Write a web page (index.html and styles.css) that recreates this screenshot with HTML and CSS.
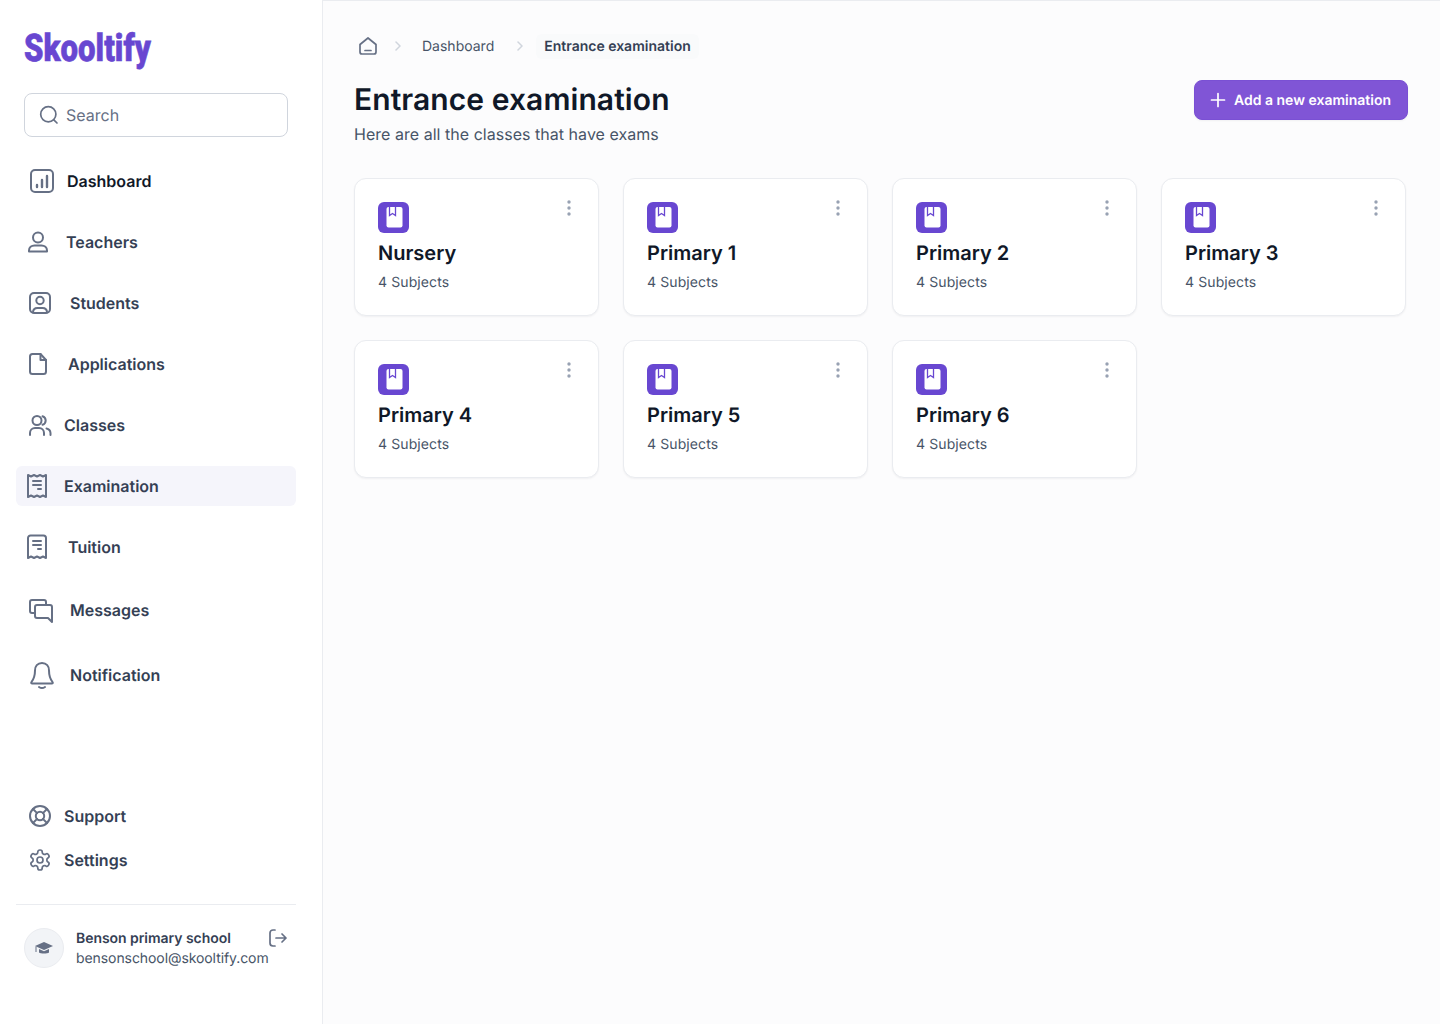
FILE: index.html
```html
<!DOCTYPE html>
<html lang="en">
<head>
    <meta charset="UTF-8">
    <meta name="viewport" content="width=device-width, initial-scale=1.0">
    <title>Entrance examination</title>
    <link rel="stylesheet" href="styles.css">
</head>
<body>
    <svg class="defs" width="0" height="0">
        <symbol id="book" viewBox="0 0 31 31">
            <rect width="31" height="31" rx="6" fill="#6847d1"/>
            <rect x="8.5" y="5" width="16" height="20.5" rx="2" fill="#fff"/>
            <path d="M11.5 5v8.5l3-2 3 2V5" fill="#fff" stroke="#6847d1" stroke-width="1.3"/>
        </symbol>
        <symbol id="dots" viewBox="0 0 12 16">
            <circle cx="6" cy="2" r="1.7" fill="#98a2b3"/>
            <circle cx="6" cy="8" r="1.7" fill="#98a2b3"/>
            <circle cx="6" cy="14" r="1.7" fill="#98a2b3"/>
        </symbol>
    </svg>

    <aside class="sidebar">
        <div class="logo"><span class="logo-text">Skooltify</span></div>

        <div class="search">
            <svg class="icon icon-thin" width="20" height="20" viewBox="0 0 20 20"><circle cx="9.3" cy="9.3" r="7.6"/><path d="M14.8 14.8l3.200 3.200"/></svg>
            <span>Search</span>
        </div>

        <nav class="nav">
            <a class="nav-item nav-item-dark">
                <svg class="icon" width="27" height="28" viewBox="0 0 27 28"><rect x="3" y="3" width="22" height="22" rx="4"/><path d="M9 20v-2M14 20v-7M19 20V9" stroke-width="2.400"/></svg>
                Dashboard
            </a>
            <a class="nav-item">
                <svg class="icon" width="26" height="28" viewBox="0 0 26 28"><circle cx="10" cy="9.500" r="5"/><path d="M1 23.500v-1c0-3 2.500-5 5.500-5h7c3 0 5.500 2 5.500 5v1z"/></svg>
                Teachers
            </a>
            <a class="nav-item">
                <svg class="icon" width="30" height="28" viewBox="0 0 30 28"><rect x="2" y="4" width="20" height="20" rx="4"/><circle cx="12" cy="11.500" r="3.700"/><path d="M5 23.500c0-3 2-4.500 4.500-4.500h5c2.500 0 4.500 1.500 4.500 4.500"/></svg>
                Students
            </a>
            <a class="nav-item">
                <svg class="icon" width="28" height="28" viewBox="0 0 28 28"><path d="M4.500 4h8l5.500 6v11.500a2.500 2.500 0 0 1-2.500 2.500h-11A2.500 2.500 0 0 1 2 21.500v-15A2.500 2.500 0 0 1 4.500 4z"/><path d="M12.500 4v6h5.500"/></svg>
                Applications
            </a>
            <a class="nav-item">
                <svg class="icon" width="24" height="28" viewBox="0 0 24 28"><circle cx="9" cy="9.500" r="4.500"/><path d="M2 24v-2a5 5 0 0 1 5-5h4a5 5 0 0 1 5 5v2M14.500 5.200a4.500 4.500 0 0 1 0 8.600M18.500 17.500a5 5 0 0 1 4 4.500v2"/></svg>
                Classes
            </a>
            <a class="nav-item nav-item-active">
                <svg class="icon" width="24" height="28" viewBox="0 0 24 28"><path d="M0 3l3 1.500L6 3l3 1.500L12 3l3 1.500L18 3v22l-3-1.500-3 1.500-3-1.500L6 25l-3-1.500L0 25z"/><path d="M5 9h8M5 13h8M10 17h3"/></svg>
                Examination
            </a>
            <a class="nav-item">
                <svg class="icon" width="28" height="28" viewBox="0 0 28 28"><path d="M0 25V5a2.500 2.500 0 0 1 2.500-2.500h13A2.500 2.500 0 0 1 18 5v20l-3-1.500-3 1.500-3-1.500L6 25l-3-1.500z"/><path d="M5 8h8M5 12h8M10 16h3"/></svg>
                Tuition
            </a>
            <a class="nav-item nav-item-tall">
                <svg class="icon" width="30" height="28" viewBox="0 0 30 28"><path d="M7 17H4a2 2 0 0 1-2-2V6a2 2 0 0 1 2-2h12a2 2 0 0 1 2 2v3"/><path d="M9 9h13a2 2 0 0 1 2 2v15l-4-4H9a2 2 0 0 1-2-2v-9a2 2 0 0 1 2-2z"/></svg>
                Messages
            </a>
            <a class="nav-item nav-item-tall">
                <svg class="icon" width="30" height="28" viewBox="0 0 30 28"><path d="M14 2c-4.500 0-7 3.300-7 7.500 0 5-1.200 8.500-3.500 11.500-.6.800-.3 1.500.7 1.500h19.600c1 0 1.300-.7.700-1.500C22.200 18 21 14.500 21 9.500 21 5.300 18.500 2 14 2z"/><path d="M11 26c1.800 1.300 4.200 1.300 6 0"/></svg>
                Notification
            </a>
        </nav>

        <div class="sidebar-bottom">
            <a class="nav-item">
                <svg class="icon" width="24" height="24" viewBox="0 0 24 24"><circle cx="12" cy="12" r="10"/><circle cx="12" cy="12" r="4.200"/><path d="M5 5l4.100 4.100M19 5l-4.100 4.100M5 19l4.100-4.100M19 19l-4.100-4.100"/></svg>
                Support
            </a>
            <a class="nav-item">
                <svg class="icon icon-thin" width="24" height="24" viewBox="0 0 24 24"><path d="M12.220 2h-.44a2 2 0 0 0-2 2v.18a2 2 0 0 1-1 1.730l-.43.25a2 2 0 0 1-2 0l-.15-.08a2 2 0 0 0-2.730.73l-.22.38a2 2 0 0 0 .73 2.730l.15.1a2 2 0 0 1 1 1.720v.51a2 2 0 0 1-1 1.740l-.15.09a2 2 0 0 0-.73 2.730l.22.38a2 2 0 0 0 2.730.73l.15-.08a2 2 0 0 1 2 0l.43.25a2 2 0 0 1 1 1.730V20a2 2 0 0 0 2 2h.44a2 2 0 0 0 2-2v-.18a2 2 0 0 1 1-1.730l.43-.25a2 2 0 0 1 2 0l.15.08a2 2 0 0 0 2.730-.73l.22-.39a2 2 0 0 0-.73-2.730l-.15-.08a2 2 0 0 1-1-1.740v-.5a2 2 0 0 1 1-1.740l.15-.09a2 2 0 0 0 .73-2.730l-.22-.38a2 2 0 0 0-2.730-.73l-.15.08a2 2 0 0 1-2 0l-.43-.25a2 2 0 0 1-1-1.730V4a2 2 0 0 0-2-2z"/><circle cx="12" cy="12" r="3"/></svg>
                Settings
            </a>

            <div class="profile">
                <div class="avatar">
                    <svg width="20" height="20" viewBox="0 0 20 20"><path d="M10 4L1 8l9 4 9-4z" fill="#667085"/><path d="M5 11v3.500c1.500 1.300 8.500 1.300 10 0V11l-5 2.200z" fill="#667085"/><path d="M2 8.500V14" stroke="#667085" stroke-width="1"/></svg>
                </div>
                <div class="profile-text">
                    <div class="profile-name">
                        <span>Benson primary school</span>
                        <svg class="icon icon-thin profile-logout" width="20" height="20" viewBox="0 0 20 20"><path d="M7 2H5a3 3 0 0 0-3 3v10a3 3 0 0 0 3 3h2M8 10h10M14 6l4 4-4 4"/></svg>
                    </div>
                    <div class="profile-email">bensonschool@skooltify.com</div>
                </div>
            </div>
        </div>
    </aside>

    <main class="main">
        <div class="breadcrumbs">
            <svg class="icon icon-thin" width="20" height="20" viewBox="0 0 20 20"><path d="M2 8.500L10 2l8 6.500V16a2 2 0 0 1-2 2H4a2 2 0 0 1-2-2z"/><path d="M7 14.500h6"/></svg>
            <svg class="chevron" width="8" height="10" viewBox="0 0 8 10"><path d="M2 1l4 4-4 4"/></svg>
            <span class="crumb">Dashboard</span>
            <svg class="chevron chevron-second" width="8" height="10" viewBox="0 0 8 10"><path d="M2 1l4 4-4 4"/></svg>
            <span class="crumb crumb-current">Entrance examination</span>
        </div>

        <header class="page-header">
            <div>
                <h1>Entrance examination</h1>
                <p>Here are all the classes that have exams</p>
            </div>
            <button class="add-button">
                <svg width="16" height="16" viewBox="0 0 16 16"><path d="M8 1.500v13M1.500 8h13" stroke="#fff" stroke-width="1.700" stroke-linecap="round"/></svg>
                Add a new examination
            </button>
        </header>

        <section class="cards">
            <div class="card">
                <div><svg class="card-icon"><use href="#book"/></svg><h2>Nursery</h2><p>4 Subjects</p></div>
                <svg class="card-menu"><use href="#dots"/></svg>
            </div>
            <div class="card">
                <div><svg class="card-icon"><use href="#book"/></svg><h2>Primary 1</h2><p>4 Subjects</p></div>
                <svg class="card-menu"><use href="#dots"/></svg>
            </div>
            <div class="card">
                <div><svg class="card-icon"><use href="#book"/></svg><h2>Primary 2</h2><p>4 Subjects</p></div>
                <svg class="card-menu"><use href="#dots"/></svg>
            </div>
            <div class="card">
                <div><svg class="card-icon"><use href="#book"/></svg><h2>Primary 3</h2><p>4 Subjects</p></div>
                <svg class="card-menu"><use href="#dots"/></svg>
            </div>
            <div class="card">
                <div><svg class="card-icon"><use href="#book"/></svg><h2>Primary 4</h2><p>4 Subjects</p></div>
                <svg class="card-menu"><use href="#dots"/></svg>
            </div>
            <div class="card">
                <div><svg class="card-icon"><use href="#book"/></svg><h2>Primary 5</h2><p>4 Subjects</p></div>
                <svg class="card-menu"><use href="#dots"/></svg>
            </div>
            <div class="card">
                <div><svg class="card-icon"><use href="#book"/></svg><h2>Primary 6</h2><p>4 Subjects</p></div>
                <svg class="card-menu"><use href="#dots"/></svg>
            </div>
        </section>
    </main>
</body>
</html>
```

FILE: styles.css
```css
* {
    box-sizing: border-box;
}

body {
    font-family: 'Inter', sans-serif;
    display: flex;
    height: 100vh;
    margin: 0;
    overflow: hidden;
    background-color: #fcfcfd;
    color: #344054;
    text-rendering: geometricPrecision;
}

.defs {
    position: absolute;
}

.icon {
    flex-shrink: 0;
    fill: none;
    stroke: #667085;
    stroke-width: 2;
    stroke-linecap: round;
    stroke-linejoin: round;
    overflow: visible;
}

.icon-thin {
    stroke-width: 1.7;
}

/* sidebar */
.sidebar {
    display: flex;
    flex-direction: column;
    flex-shrink: 0;
    width: 323px;
    padding: 0 26px 55px 16px;
    background-color: #fff;
    border-right: 1px solid #eaecf0;
}

.logo {
    height: 93px;
    padding: 26px 0 0 8px;
}

.logo-text {
    display: inline-block;
    font-family: 'Roboto', sans-serif;
    font-size: 38px;
    line-height: 46px;
    font-weight: 900;
    color: #6847d1;
    -webkit-text-stroke: 0.6px #6847d1;
    transform: scaleX(0.82);
    transform-origin: left;
}

.search {
    display: flex;
    align-items: center;
    gap: 7px;
    width: 264px;
    height: 44px;
    margin: 0 0 24px 8px;
    padding: 0 14px;
    border: 1px solid #d0d5dd;
    border-radius: 8px;
    font-size: 16px;
    color: #667085;
}

.nav {
    display: flex;
    flex-direction: column;
    gap: 21px;
}

.nav-item {
    display: flex;
    align-items: center;
    gap: 12px;
    height: 40px;
    padding: 0 12px;
    border-radius: 6px;
    font-size: 16px;
    font-weight: 600;
    color: #344054;
}

.nav-item-dark {
    color: #101828;
}

.nav-item-active {
    background-color: #f5f5fb;
}

.nav-item-tall {
    height: 44px;
}

.sidebar-bottom {
    display: flex;
    flex-direction: column;
    gap: 4px;
    margin-top: auto;
}

.profile {
    display: flex;
    gap: 12px;
    margin-top: 20px;
    padding: 23px 8px 0;
    border-top: 1px solid #eaecf0;
}

.avatar {
    display: flex;
    align-items: center;
    justify-content: center;
    flex-shrink: 0;
    width: 40px;
    height: 40px;
    border-radius: 50%;
    background-color: #f2f4f7;
    border: 1px solid #eaecf0;
}

.profile-text {
    flex: 1;
    margin-top: 1px;
    font-size: 14px;
    line-height: 20px;
    white-space: nowrap;
}

.profile-name {
    display: flex;
    justify-content: space-between;
    font-weight: 600;
    letter-spacing: -0.05px;
}

.profile-logout {
    margin-top: -1px;
}

.profile-email {
    color: #475467;
    letter-spacing: -0.08px;
}

/* main */
.main {
    flex: 1;
    padding: 32px 32px 0 31px;
    border-top: 1px solid #eaecf0;
}

.breadcrumbs {
    display: flex;
    align-items: center;
    height: 28px;
    margin-top: -1px;
    padding-left: 4px;
    font-size: 14px;
    color: #475467;
}

.chevron {
    margin: 0 20px 0 16px;
    fill: none;
    stroke: #d0d5dd;
    stroke-width: 1.500;
    stroke-linecap: round;
    stroke-linejoin: round;
}

.chevron-second {
    margin: 0 12px 0 22px;
}

.crumb-current {
    padding: 4px 8px;
    border-radius: 6px;
    background-color: #f9fafb;
    font-weight: 600;
    color: #344054;
}

.page-header {
    display: flex;
    justify-content: space-between;
    align-items: flex-start;
    margin-top: 20px;
}

h1 {
    margin: 1px 0 0;
    font-size: 30px;
    line-height: 38px;
    font-weight: 600;
    letter-spacing: 0.08px;
    color: #101828;
}

.page-header p {
    margin: 3px 0 0;
    font-size: 16px;
    line-height: 24px;
    letter-spacing: 0.03px;
    color: #475467;
}

.add-button {
    display: flex;
    align-items: center;
    gap: 8px;
    height: 40px;
    padding: 0 16px 0 15px;
    border: 1px solid #7a50d4;
    border-radius: 8px;
    background-color: #8055d6;
    font-family: inherit;
    font-size: 14px;
    font-weight: 600;
    color: #fff;
    text-rendering: geometricPrecision;
    box-shadow: 0 1px 2px rgba(16, 24, 40, 0.05);
}

.cards {
    display: grid;
    grid-template-columns: repeat(4, 245px);
    gap: 24px;
    margin-top: 32px;
}

.card {
    display: flex;
    justify-content: space-between;
    height: 138px;
    padding: 23px;
    background-color: #fff;
    border: 1px solid #eaecf0;
    border-radius: 12px;
    box-shadow: 0 1px 2px rgba(16, 24, 40, 0.05);
}

.card-icon {
    display: block;
    width: 31px;
    height: 31px;
}

.card h2 {
    margin: 5px 0 0;
    font-size: 20px;
    line-height: 30px;
    font-weight: 600;
    color: #101828;
}

.card p {
    margin: 5px 0 0;
    font-size: 14px;
    line-height: 20px;
    letter-spacing: 0.1px;
    color: #475467;
}

.card-menu {
    width: 12px;
    height: 16px;
    margin-top: -2px;
}
```
